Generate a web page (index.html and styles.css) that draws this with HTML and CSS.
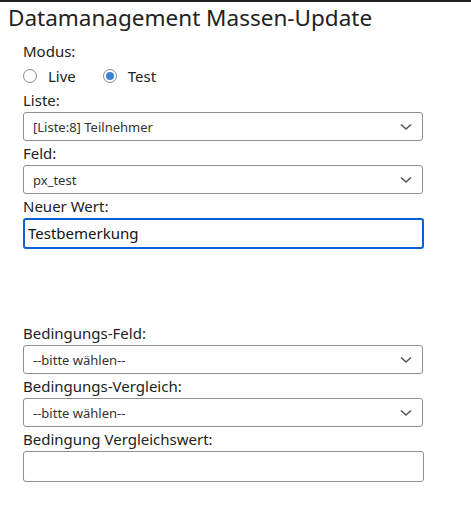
FILE: index.html
```html
<!DOCTYPE html>
<html lang="de">
<head>
<meta charset="utf-8">
<title>Datamanagement Massen-Update</title>
<link rel="stylesheet" href="styles.css">
</head>
<body>
<div class="topbar"></div>
<h1 class="title">Datamanagement Massen-Update</h1>
<form class="form">
  <div class="label">Modus:</div>
  <div class="radios">
    <label class="radio"><span class="circle"></span>Live</label>
    <label class="radio"><span class="circle checked"></span>Test</label>
  </div>
  <div class="label">Liste:</div>
  <div class="select"><span>[Liste:8] Teilnehmer</span><svg width="12" height="8" viewBox="0 0 12 8"><path d="M1 1.5 L6 6 L11 1.5" fill="none" stroke="#555" stroke-width="1.6"/></svg></div>
  <div class="label">Feld:</div>
  <div class="select"><span>px_test</span><svg width="12" height="8" viewBox="0 0 12 8"><path d="M1 1.5 L6 6 L11 1.5" fill="none" stroke="#555" stroke-width="1.6"/></svg></div>
  <div class="label">Neuer Wert:</div>
  <div class="input focused">Testbemerkung</div>
  <div class="spacer"></div>
  <div class="label">Bedingungs-Feld:</div>
  <div class="select"><span>--bitte wählen--</span><svg width="12" height="8" viewBox="0 0 12 8"><path d="M1 1.5 L6 6 L11 1.5" fill="none" stroke="#555" stroke-width="1.6"/></svg></div>
  <div class="label">Bedingungs-Vergleich:</div>
  <div class="select"><span>--bitte wählen--</span><svg width="12" height="8" viewBox="0 0 12 8"><path d="M1 1.5 L6 6 L11 1.5" fill="none" stroke="#555" stroke-width="1.6"/></svg></div>
  <div class="label">Bedingung Vergleichswert:</div>
  <div class="input"></div>
</form>
</body>
</html>
```
FILE: styles.css
```css
* { box-sizing: border-box; }
html, body { margin: 0; padding: 0; background: #fff; }
body {
  font-family: "Noto Sans", "Open Sans", "Liberation Sans", sans-serif;
  color: #222;
}
.topbar { height: 2px; background: #222; }
.title {
  margin: 0;
  padding: 1px 0 0 8px;
  font-size: 22.5px;
  font-weight: 400;
  line-height: 30px;
  color: #222;
}
.form {
  padding: 6px 0 0 23px;
  display: flex;
  flex-direction: column;
  width: 424px;
}
.label {
  font-size: 15px;
  line-height: 20px;
  padding-top: 2px;
  margin-bottom: 2px;
  color: #222;
}
.radios {
  display: flex;
  align-items: center;
  height: 24px;
  margin-top: 1px;
}
.radio {
  display: flex;
  align-items: center;
  font-size: 15px;
  color: #222;
  margin-right: 27px;
}
.circle {
  width: 14px;
  height: 14px;
  border: 1px solid #8a8a8a;
  border-radius: 50%;
  margin-right: 11px;
  display: flex;
  align-items: center;
  justify-content: center;
}
.circle.checked::after {
  content: "";
  width: 8px;
  height: 8px;
  border-radius: 50%;
  background: #3b82d0;
}
.select {
  width: 400px;
  height: 29px;
  border: 1px solid #8f8f8f;
  border-radius: 3px;
  display: flex;
  align-items: center;
  justify-content: space-between;
  padding: 0 10px 0 9px;
  font-size: 13px;
  color: #333;
}
.select svg { display: block; }
.input {
  width: 401px;
  height: 31px;
  border: 1px solid #8f8f8f;
  border-radius: 3px;
  padding: 0 4px;
  font-size: 15px;
  line-height: 29px;
  color: #111;
}
.input.focused {
  border: 2px solid #0b5fd8;
  line-height: 27px;
  padding: 0 3px;
}
.spacer { height: 72px; }
```
